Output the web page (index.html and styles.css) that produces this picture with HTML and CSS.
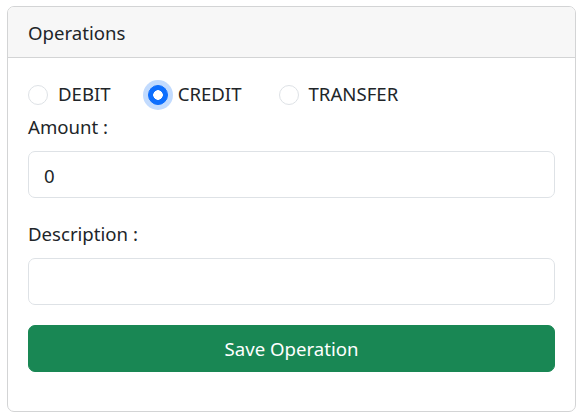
FILE: index.html
```html
<!DOCTYPE html>
<html lang="en">
<head>
<meta charset="utf-8">
<title>Operations</title>
<link rel="stylesheet" href="styles.css">
</head>
<body>
<div class="card">
  <div class="card-header">Operations</div>
  <div class="card-body">
    <form class="op-form">
      <div class="radios">
        <label class="check"><input type="radio" name="type" class="radio"><span>DEBIT</span></label>
        <label class="check"><input type="radio" name="type" class="radio focused" checked><span>CREDIT</span></label>
        <label class="check"><input type="radio" name="type" class="radio"><span>TRANSFER</span></label>
      </div>
      <label class="form-label">Amount :</label>
      <input class="form-control" type="text" value="0">
      <label class="form-label spaced">Description :</label>
      <input class="form-control" type="text" value="">
      <button class="btn" type="button">Save Operation</button>
    </form>
  </div>
</div>
</body>
</html>
```

FILE: styles.css
```css
* { box-sizing: border-box; }

body {
  margin: 6px 5px 0 7px;
  font-family: "Noto Sans", "Open Sans", sans-serif;
  font-size: 18.6px;
  line-height: 30px;
  color: #212529;
  background: #fff;
}

.card {
  border: 1px solid #d3d4d5;
  border-radius: 7px;
  overflow: hidden;
  height: 406px;
}

.card-header {
  background: #f7f7f7;
  border-bottom: 1px solid #d3d4d5;
  padding: 11px 20px 9px;
}

.card-body {
  padding: 20px;
}

.op-form {
  display: flex;
  flex-direction: column;
}

.radios {
  display: flex;
  gap: 37px;
  margin-bottom: 3px;
  padding-top: 1px;
  height: 30px;
}

.check {
  display: flex;
  align-items: center;
  gap: 10px;
}

.radio {
  appearance: none;
  -webkit-appearance: none;
  margin: 2px 0 0 0;
  width: 20px;
  height: 20px;
  border: 1px solid #dee2e6;
  border-radius: 50%;
  background: #fff;
  flex: none;
}

.radio:checked {
  background: #0d6efd radial-gradient(circle, #fff 0 4.5px, transparent 5px);
  border-color: #0d6efd;
}

.radio.focused {
  box-shadow: 0 0 0 5px rgba(13, 110, 253, 0.25);
}

.form-label {
  display: block;
  margin-bottom: 9px;
  padding-top: 1px;
}

.form-label.spaced {
  margin-top: 20px;
}

.form-control {
  display: block;
  width: 100%;
  height: 47px;
  padding: 8px 15px 7px;
  font: inherit;
  color: #212529;
  border: 1px solid #dee2e6;
  border-radius: 7px;
  background: #fff;
  outline: none;
}

.btn {
  margin-top: 20px;
  height: 47px;
  width: 100%;
  border: 1px solid #198754;
  border-radius: 7px;
  background: #198754;
  color: #fff;
  font: inherit;
  padding: 1px 0 0;
}
```
